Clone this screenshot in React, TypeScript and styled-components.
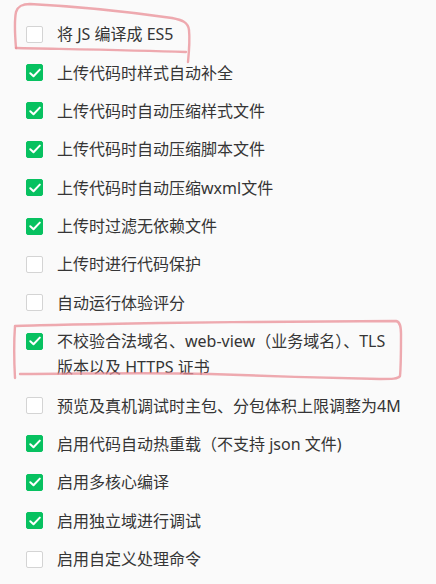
import React from 'react'
import styled, { createGlobalStyle } from 'styled-components'

const GlobalStyle = createGlobalStyle`
	html, body {
		margin: 0;
		padding: 0;
		background: #fafafa;
	}
	body {
		font-family: "Noto Sans", "Noto Sans CJK SC", sans-serif;
		color: #353535;
	}
`

const StyledPage = styled.div`
	position: relative;
	width: 436px;
	height: 584px;
	padding: 15px 26px 0 26px;
	box-sizing: border-box;
	background: #fafafa;
	overflow: hidden;
`

const StyledList = styled.ul`
	list-style: none;
	margin: 0;
	padding: 0;
	display: flex;
	flex-direction: column;
`

const StyledRow = styled.li`
	display: flex;
	flex-direction: row;
	align-items: flex-start;
	gap: 14px;
	padding: 6.2px 0;
`

const StyledBox = styled.span<{checked: boolean}>`
	flex-shrink: 0;
	width: 17px;
	height: 17px;
	margin-top: 4.5px;
	box-sizing: border-box;
	border-radius: 2px;
	display: flex;
	align-items: center;
	justify-content: center;
	background-color: ${(props) => props.checked ? '#07c160' : '#fff'};
	border: 1px solid ${(props) => props.checked ? '#07c160' : '#d4d4d4'};
`

const StyledLabel = styled.span`
	font-size: 16px;
	line-height: 26px;
	letter-spacing: 0;
	max-width: 345px;
`

const StyledMarks = styled.svg`
	position: absolute;
	left: 0;
	top: 0;
	pointer-events: none;
`

const items: {label: string, checked: boolean}[] = [
	{label: '将 JS 编译成 ES5', checked: false},
	{label: '上传代码时样式自动补全', checked: true},
	{label: '上传代码时自动压缩样式文件', checked: true},
	{label: '上传代码时自动压缩脚本文件', checked: true},
	{label: '上传代码时自动压缩wxml文件', checked: true},
	{label: '上传时过滤无依赖文件', checked: true},
	{label: '上传时进行代码保护', checked: false},
	{label: '自动运行体验评分', checked: false},
	{label: '不校验合法域名、web-view（业务域名）、TLS 版本以及 HTTPS 证书', checked: true},
	{label: '预览及真机调试时主包、分包体积上限调整为4M', checked: false},
	{label: '启用代码自动热重载（不支持 json 文件)', checked: true},
	{label: '启用多核心编译', checked: true},
	{label: '启用独立域进行调试', checked: true},
	{label: '启用自定义处理命令', checked: false}
]

const Check = () => (
	<svg width='12' height='10' viewBox='0 0 12 10'>
		<path d='M1.3 5.2 L4.5 8.2 L10.8 1.6' fill='none' stroke='#fff' strokeWidth='2' strokeLinecap='round' strokeLinejoin='round'/>
	</svg>
)

// hand drawn red marks over the screenshot
const Marks = () => (
	<StyledMarks width='436' height='584' viewBox='0 0 436 584'>
		<g fill='none' stroke='#ea8d96' strokeOpacity='0.75' strokeWidth='2.4' strokeLinecap='round' strokeLinejoin='round'>
			<path d='M16 48 C15 36 14 22 16 12 C18 6 22 4 30 4 C70 6 130 12 172 18 C182 20 188 22 189 30 C190 40 189 52 188 62'/>
			<path d='M16 48 C60 49 130 50 186 52'/>
			<path d='M15 378 C14 360 14 340 15 326 C40 325 100 324 160 323 C240 322 330 321 396 321 C400 322 401 326 401 334 C401 350 401 366 400 376 C398 379 392 379 380 379 C330 378 260 376 210 374 C140 372 80 374 20 374'/>
		</g>
	</StyledMarks>
)

export default function App() {
	return (
		<>
			<GlobalStyle/>
			<StyledPage>
				<StyledList>
					{items.map((item) => (
						<StyledRow key={item.label}>
							<StyledBox checked={item.checked}>
								{item.checked && <Check/>}
							</StyledBox>
							<StyledLabel>{item.label}</StyledLabel>
						</StyledRow>
					))}
				</StyledList>
				<Marks/>
			</StyledPage>
		</>
	)
}
